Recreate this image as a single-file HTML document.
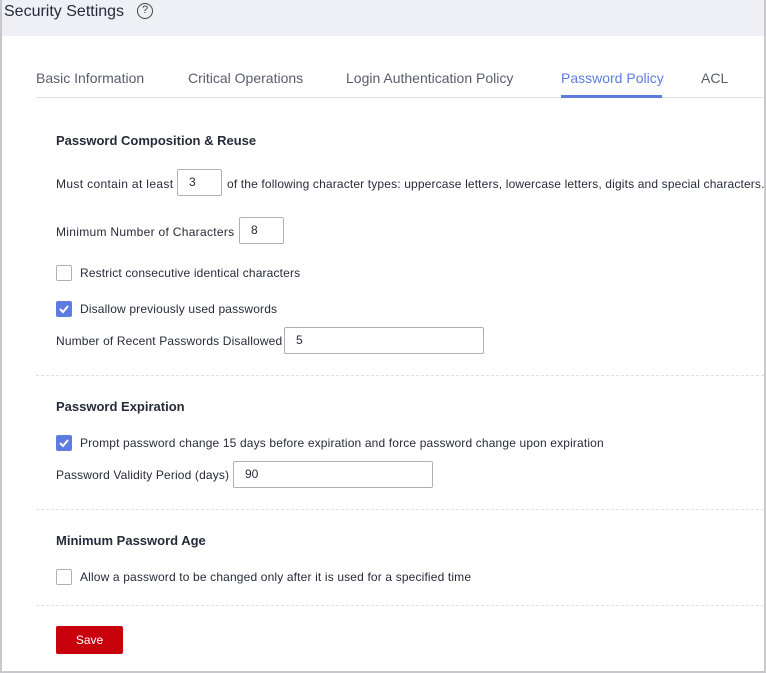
<!DOCTYPE html>
<html><head><meta charset="utf-8"><style>
*{margin:0;padding:0;box-sizing:border-box}
body{width:766px;height:673px;position:relative;background:#fff;font-family:"Liberation Sans",sans-serif;color:#252b3a;overflow:hidden}
.frame{position:absolute;left:0;top:0;width:766px;height:673px;border:2px solid #c8c8cc;border-top:none}
.hdr{position:absolute;left:2px;top:0;width:762px;height:36px;background:#eef0f5}
.a{position:absolute;white-space:nowrap}
.t{font-size:16px;top:3px;left:4px;color:#252b3a}
.q{position:absolute;left:137px;top:3px;width:16px;height:16px;border:1.5px solid #444;border-radius:50%;font-size:11px;text-align:center;line-height:13px;color:#444}
.tab{font-size:14px;top:70px;color:#575d6c}
.tabline{position:absolute;left:36px;top:97px;width:728px;height:1px;background:#dfe1e6}
.h{font-size:13px;font-weight:bold;color:#252b3a;left:56px}
.l{font-size:12px;color:#252b3a;letter-spacing:0.15px}
.in{position:absolute;height:27px;border:1px solid #adb0b8;border-radius:2px;font-size:12px;padding-left:11px;line-height:25px}
.cb{position:absolute;left:56px;width:16px;height:16px;border:1px solid #adb0b8;border-radius:2px;background:#fff}
.cb.on{background:#5e7ce0;border-color:#5e7ce0}
.dash{position:absolute;left:36px;width:728px;border-top:1px dashed #dfe1e6}
.save{position:absolute;left:56px;top:626px;width:67px;height:28px;background:#c7000b;border-radius:2px;color:#fff;font-size:12px;text-align:center;line-height:28px}
</style></head><body>
<div class="hdr"></div>
<div class="frame"></div>
<div class="a t">Security Settings</div>
<div class="q">?</div>
<div class="a tab" style="left:36px">Basic Information</div>
<div class="a tab" style="left:188px">Critical Operations</div>
<div class="a tab" style="left:346px">Login Authentication Policy</div>
<div class="a tab" style="left:561px;color:#5e7ce0">Password Policy</div>
<div class="a tab" style="left:701px">ACL</div>
<div class="tabline"></div>
<div style="position:absolute;left:561px;top:95px;width:101px;height:3px;background:#5e7ce0"></div>

<div class="a h" style="top:133px">Password Composition &amp; Reuse</div>
<div class="a l" style="left:56px;top:177px;letter-spacing:0.35px">Must contain at least</div>
<div class="in" style="left:177px;top:169px;width:45px">3</div>
<div class="a l" style="left:227px;top:177px">of the following character types: uppercase letters, lowercase letters, digits and special characters.</div>
<div class="a l" style="left:56px;top:225px;letter-spacing:0.3px">Minimum Number of Characters</div>
<div class="in" style="left:239px;top:217px;width:45px">8</div>
<div class="cb" style="top:265px"></div>
<div class="a l" style="left:80px;top:266px">Restrict consecutive identical characters</div>
<div class="cb on" style="top:301px"><svg width="14" height="14" viewBox="0 0 14 14"><path d="M3 7l3 3 5-6" stroke="#fff" stroke-width="2" fill="none"/></svg></div>
<div class="a l" style="left:80px;top:302px">Disallow previously used passwords</div>
<div class="a l" style="left:56px;top:334px">Number of Recent Passwords Disallowed</div>
<div class="in" style="left:284px;top:327px;width:200px">5</div>
<div class="dash" style="top:375px"></div>

<div class="a h" style="top:399px">Password Expiration</div>
<div class="cb on" style="top:435px"><svg width="14" height="14" viewBox="0 0 14 14"><path d="M3 7l3 3 5-6" stroke="#fff" stroke-width="2" fill="none"/></svg></div>
<div class="a l" style="left:80px;top:436px">Prompt password change 15 days before expiration and force password change upon expiration</div>
<div class="a l" style="left:56px;top:468px">Password Validity Period (days)</div>
<div class="in" style="left:233px;top:461px;width:200px">90</div>
<div class="dash" style="top:509px"></div>

<div class="a h" style="top:533px">Minimum Password Age</div>
<div class="cb" style="top:569px"></div>
<div class="a l" style="left:80px;top:570px">Allow a password to be changed only after it is used for a specified time</div>
<div class="dash" style="top:605px"></div>
<div class="save">Save</div>
</body></html>
